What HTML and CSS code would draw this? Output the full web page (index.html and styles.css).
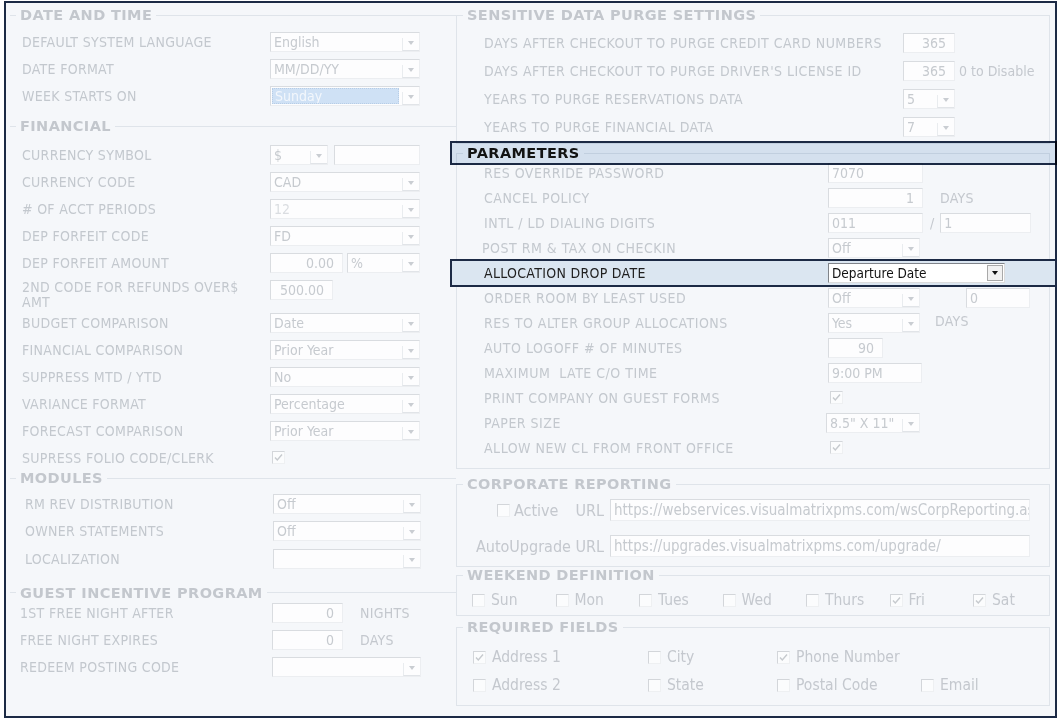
FILE: index.html
```html
<!DOCTYPE html>
<html lang="en">
<head>
    <meta charset="UTF-8">
    <link rel="stylesheet" href="styles.css">
    <title>Property Settings</title>
</head>
<body>
<div class="frame">

    <div class="col col-left">

        <fieldset class="grp left g-date">
            <legend>DATE AND TIME</legend>
            <div class="row"><span class="lbl">DEFAULT SYSTEM LANGUAGE</span><div class="sel w150"><span class="val">English</span><i class="arr"></i></div></div>
            <div class="row"><span class="lbl">DATE FORMAT</span><div class="sel w150"><span class="val">MM/DD/YY</span><i class="arr"></i></div></div>
            <div class="row"><span class="lbl">WEEK STARTS ON</span><div class="sel w150"><span class="val picked">Sunday</span><i class="arr"></i></div></div>
        </fieldset>

        <fieldset class="grp left g-fin">
            <legend>FINANCIAL</legend>
            <div class="row"><span class="lbl">CURRENCY SYMBOL</span><div class="sel w58"><span class="val">$</span><i class="arr"></i></div><div class="inp w86 ml6"></div></div>
            <div class="row"><span class="lbl">CURRENCY CODE</span><div class="sel w150"><span class="val">CAD</span><i class="arr"></i></div></div>
            <div class="row"><span class="lbl"># OF ACCT PERIODS</span><div class="sel w150 off"><span class="val">12</span><i class="arr"></i></div></div>
            <div class="row"><span class="lbl">DEP FORFEIT CODE</span><div class="sel w150"><span class="val">FD</span><i class="arr"></i></div></div>
            <div class="row"><span class="lbl">DEP FORFEIT AMOUNT</span><div class="inp w73 num">0.00</div><div class="sel w73 ml4"><span class="val">%</span><i class="arr"></i></div></div>
            <div class="row tall"><span class="lbl wrap">2ND CODE FOR REFUNDS OVER$ AMT</span><div class="inp w63 num">500.00</div></div>
            <div class="row"><span class="lbl">BUDGET COMPARISON</span><div class="sel w150"><span class="val">Date</span><i class="arr"></i></div></div>
            <div class="row"><span class="lbl">FINANCIAL COMPARISON</span><div class="sel w150"><span class="val">Prior Year</span><i class="arr"></i></div></div>
            <div class="row"><span class="lbl">SUPPRESS MTD / YTD</span><div class="sel w150"><span class="val">No</span><i class="arr"></i></div></div>
            <div class="row"><span class="lbl">VARIANCE FORMAT</span><div class="sel w150"><span class="val">Percentage</span><i class="arr"></i></div></div>
            <div class="row"><span class="lbl">FORECAST COMPARISON</span><div class="sel w150"><span class="val">Prior Year</span><i class="arr"></i></div></div>
            <div class="row"><span class="lbl">SUPRESS FOLIO CODE/CLERK</span><span class="cb ml2"><svg viewBox="0 0 9 9"><path d="M1 4.5l2.3 2.5L8 1.5" fill="none" stroke="#c6cace" stroke-width="1.4"/></svg></span></div>
        </fieldset>

        <fieldset class="grp left g-mod">
            <legend>MODULES</legend>
            <div class="row"><span class="lbl">RM REV DISTRIBUTION</span><div class="sel w148"><span class="val">Off</span><i class="arr"></i></div></div>
            <div class="row"><span class="lbl">OWNER STATEMENTS</span><div class="sel w148"><span class="val">Off</span><i class="arr"></i></div></div>
            <div class="row"><span class="lbl">LOCALIZATION</span><div class="sel w148"><span class="val"></span><i class="arr"></i></div></div>
        </fieldset>

        <fieldset class="grp left g-guest">
            <legend>GUEST INCENTIVE PROGRAM</legend>
            <div class="row"><span class="lbl">1ST FREE NIGHT AFTER</span><div class="inp w71 num">0</div><span class="unit">NIGHTS</span></div>
            <div class="row"><span class="lbl">FREE NIGHT EXPIRES</span><div class="inp w71 num">0</div><span class="unit">DAYS</span></div>
            <div class="row"><span class="lbl">REDEEM POSTING CODE</span><div class="sel w149"><span class="val"></span><i class="arr"></i></div></div>
        </fieldset>

    </div>

    <div class="col col-right">

        <fieldset class="grp right g-purge">
            <legend>SENSITIVE DATA PURGE SETTINGS</legend>
            <div class="row"><span class="lbl">DAYS AFTER CHECKOUT TO PURGE CREDIT CARD NUMBERS</span><div class="inp w52 num">365</div></div>
            <div class="row"><span class="lbl">DAYS AFTER CHECKOUT TO PURGE DRIVER'S LICENSE ID</span><div class="inp w52 num">365</div><span class="note">0 to Disable</span></div>
            <div class="row"><span class="lbl">YEARS TO PURGE RESERVATIONS DATA</span><div class="sel w52"><span class="val">5</span><i class="arr"></i></div></div>
            <div class="row"><span class="lbl">YEARS TO PURGE FINANCIAL DATA</span><div class="sel w52"><span class="val">7</span><i class="arr"></i></div></div>
        </fieldset>

        <fieldset class="grp right g-params">
            <legend class="hl-legend">PARAMETERS<span class="mark"></span></legend>
            <div class="row"><span class="lbl">RES OVERRIDE PASSWORD</span><div class="inp w95">7070</div></div>
            <div class="row"><span class="lbl">CANCEL POLICY</span><div class="inp w95 num">1</div><span class="unit">DAYS</span></div>
            <div class="row"><span class="lbl">INTL / LD DIALING DIGITS</span><div class="inp w95">011</div><span class="slash">/</span><div class="inp w91">1</div></div>
            <div class="row"><span class="lbl nudge">POST RM &amp; TAX ON CHECKIN</span><div class="sel w92"><span class="val">Off</span><i class="arr"></i></div></div>
            <div class="row hl"><span class="lbl">ALLOCATION DROP DATE</span><div class="sel live w177"><span class="val">Departure Date</span><i class="arr"></i></div></div>
            <div class="row"><span class="lbl">ORDER ROOM BY LEAST USED</span><div class="sel w92"><span class="val">Off</span><i class="arr"></i></div><div class="inp w64 ml46">0</div></div>
            <div class="row"><span class="lbl">RES TO ALTER GROUP ALLOCATIONS</span><div class="sel w92"><span class="val">Yes</span><i class="arr"></i></div><span class="unit up">DAYS</span></div>
            <div class="row"><span class="lbl">AUTO LOGOFF # OF MINUTES</span><div class="inp w55 num">90</div></div>
            <div class="row"><span class="lbl">MAXIMUM&nbsp; LATE C/O TIME</span><div class="inp w94">9:00 PM</div></div>
            <div class="row"><span class="lbl">PRINT COMPANY ON GUEST FORMS</span><span class="cb ml2"><svg viewBox="0 0 9 9"><path d="M1 4.5l2.3 2.5L8 1.5" fill="none" stroke="#c6cace" stroke-width="1.4"/></svg></span></div>
            <div class="row"><span class="lbl">PAPER SIZE</span><div class="sel w94 mlm2"><span class="val">8.5" X 11"</span><i class="arr"></i></div></div>
            <div class="row"><span class="lbl">ALLOW NEW CL FROM FRONT OFFICE</span><span class="cb ml2"><svg viewBox="0 0 9 9"><path d="M1 4.5l2.3 2.5L8 1.5" fill="none" stroke="#c6cace" stroke-width="1.4"/></svg></span></div>
        </fieldset>

        <fieldset class="grp right g-corp">
            <legend>CORPORATE REPORTING</legend>
            <div class="corp-row">
                <div class="corp-lbl"><span class="cb"></span><span class="txt ml4">Active</span><span class="txt ml17">URL</span></div>
                <div class="inp url">https://webservices.visualmatrixpms.com/wsCorpReporting.asmx</div>
            </div>
            <div class="corp-row">
                <div class="corp-lbl"><span class="txt">AutoUpgrade URL</span></div>
                <div class="inp url">https://upgrades.visualmatrixpms.com/upgrade/</div>
            </div>
        </fieldset>

        <fieldset class="grp right g-week">
            <legend>WEEKEND DEFINITION</legend>
            <div class="days">
                <label class="chk"><span class="cb"></span>Sun</label>
                <label class="chk"><span class="cb"></span>Mon</label>
                <label class="chk"><span class="cb"></span>Tues</label>
                <label class="chk"><span class="cb"></span>Wed</label>
                <label class="chk"><span class="cb"></span>Thurs</label>
                <label class="chk"><span class="cb"><svg viewBox="0 0 9 9"><path d="M1 4.5l2.3 2.5L8 1.5" fill="none" stroke="#c6cace" stroke-width="1.4"/></svg></span>Fri</label>
                <label class="chk"><span class="cb"><svg viewBox="0 0 9 9"><path d="M1 4.5l2.3 2.5L8 1.5" fill="none" stroke="#c6cace" stroke-width="1.4"/></svg></span>Sat</label>
            </div>
        </fieldset>

        <fieldset class="grp right g-req">
            <legend>REQUIRED FIELDS</legend>
            <div class="req">
                <label class="chk"><span class="cb"><svg viewBox="0 0 9 9"><path d="M1 4.5l2.3 2.5L8 1.5" fill="none" stroke="#c6cace" stroke-width="1.4"/></svg></span>Address 1</label>
                <label class="chk"><span class="cb"></span>City</label>
                <label class="chk"><span class="cb"><svg viewBox="0 0 9 9"><path d="M1 4.5l2.3 2.5L8 1.5" fill="none" stroke="#c6cace" stroke-width="1.4"/></svg></span>Phone Number</label>
                <span></span>
                <label class="chk"><span class="cb"></span>Address 2</label>
                <label class="chk"><span class="cb"></span>State</label>
                <label class="chk"><span class="cb"></span>Postal Code</label>
                <label class="chk"><span class="cb"></span>Email</label>
            </div>
        </fieldset>

    </div>
</div>
</body>
</html>
```

FILE: styles.css
```css
* {
    box-sizing: border-box;
}

body {
    margin: 0;
    background-color: #ffffff;
    font-family: "DejaVu Sans Condensed", "DejaVu Sans", Verdana, sans-serif;
    font-stretch: condensed;
    color: #c4c8ce;
}

.frame {
    margin: 1px 0 0 4px;
    width: 1053px;
    height: 717px;
    border: 2px solid #1c2a45;
    background-color: #f5f7fa;
    display: flex;
    padding: 5px 0 0 4px;
}

.col-left {
    width: 446px;
}

.col-right {
    width: 594px;
}

/* section boxes */
.grp {
    margin: 0;
    min-width: 0;
    border: 1px solid #dfe4ea;
    padding: 0 0 0 6px;
}

.grp.left {
    border-width: 1px 0 0 0;
}

.grp legend {
    padding: 0 4px;
    font-family: "DejaVu Sans", Verdana, sans-serif;
    font-stretch: normal;
    font-weight: bold;
    font-size: 14.5px;
    line-height: 14px;
    letter-spacing: 0.4px;
    color: #c3c7cd;
}

.g-date { padding-top: 6px; padding-bottom: 10px; }
.g-fin { padding-top: 8px; }
.g-mod { padding-top: 5px; padding-bottom: 13px; }
.g-guest { padding-top: 0; padding-bottom: 26px; border-bottom-width: 1px; }

.g-purge { padding-top: 7px; padding-bottom: 2px; }
.g-params { margin-top: 2px; padding-bottom: 8px; }
.g-corp { margin-top: 8px; padding-top: 1px; padding-bottom: 2px; }
.g-week { margin-top: 1px; padding-top: 5px; padding-bottom: 2px; }
.g-req { margin-top: 4px; padding-top: 9px; padding-bottom: 6px; }

/* rows */
.row {
    display: flex;
    align-items: center;
    height: 27px;
    padding-left: 6px;
}

.row.tall {
    height: 33px;
    align-items: flex-start;
    padding-top: 4px;
}

.g-mod .row { padding-left: 9px; height: 27.5px; }
.g-guest .row { padding-left: 4px; }
.g-guest .lbl { width: 252px; }
.g-purge .row { height: 28px; padding-left: 21px; }
.g-params .row { height: 25px; padding-left: 21px; }

.lbl {
    width: 248px;
    flex: none;
    font-size: 14px;
    letter-spacing: 0.3px;
    white-space: nowrap;
    color: #c3c8ce;
}

.lbl.wrap {
    white-space: normal;
    line-height: 15px;
    padding-right: 30px;
}

.g-purge .lbl { width: 419px; letter-spacing: 0.45px; }
.g-params .lbl { width: 344px; letter-spacing: 0.5px; }
.g-params .lbl.nudge { margin-left: -2px; width: 346px; }

/* controls */
.inp, .sel {
    height: 20px;
    flex: none;
    border: 1px solid;
    border-color: #d9dce0 #eceef1 #eceef1 #d9dce0;
    background-color: #fdfdfe;
    font-size: 14px;
    line-height: 18px;
    color: #c6cacf;
    white-space: nowrap;
    overflow: hidden;
}

.inp {
    padding: 0 3px;
}

.inp.num {
    text-align: right;
    padding-right: 8px;
}

.sel {
    display: flex;
    align-items: stretch;
}

.sel .val {
    flex: 1;
    padding-left: 3px;
    overflow: hidden;
}

.sel .val.picked {
    margin: 1px 3px 1px 1px;
    padding-left: 2px;
    background-color: #cfe1f5;
    border: 1px dotted #b7cde6;
    color: #f3f7fc;
    line-height: 14px;
}

.sel.off .val {
    color: #dadde1;
}

.arr {
    width: 17px;
    flex: none;
    position: relative;
    border-left: 1px solid #e9ecef;
    border-bottom: 1px solid #e1e4e8;
    margin-top: 5px;
}

.arr::after {
    content: "";
    position: absolute;
    left: 5px;
    top: 3px;
    border-left: 3.5px solid transparent;
    border-right: 3.5px solid transparent;
    border-top: 4px solid #c9cdd2;
}

.w52 { width: 52px; }
.w55 { width: 55px; }
.w58 { width: 58px; }
.w63 { width: 63px; }
.w64 { width: 64px; }
.w71 { width: 71px; }
.w73 { width: 73px; }
.w86 { width: 86px; }
.w91 { width: 91px; }
.w92 { width: 92px; }
.w94 { width: 94px; }
.w95 { width: 95px; }
.w148 { width: 148px; }
.w149 { width: 149px; }
.w150 { width: 150px; }
.w177 { width: 177px; }

.ml2 { margin-left: 2px; }
.ml4 { margin-left: 4px; }
.ml6 { margin-left: 6px; }
.ml17 { margin-left: 17px; }
.ml46 { margin-left: 46px; }
.mlm2 { margin-left: -2px; }

.unit {
    margin-left: 17px;
    font-size: 14px;
    letter-spacing: 0.3px;
}

.unit.up {
    margin-left: 15px;
    margin-top: -4px;
}

.slash {
    margin: 0 6px 0 7px;
    font-size: 14px;
}

.note {
    margin-left: 4px;
    font-size: 14px;
    white-space: nowrap;
}

/* highlighted items */
.hl-legend {
    position: relative;
    color: #141414 !important;
}

.mark {
    position: absolute;
    left: -13px;
    top: -5px;
    width: 607px;
    height: 24px;
    border: 2px solid #1c2a45;
    background-color: #dde8f3;
    mix-blend-mode: multiply;
}

.g-params .row.hl {
    height: 28px;
    margin: -1px -8px -2px -13px;
    padding-left: 32px;
    border: 2px solid #1c2a45;
    background-color: #dbe6f1;
}

.row.hl .lbl {
    color: #1f1f1f;
    letter-spacing: 0.3px;
}

.sel.live {
    background-color: #ffffff;
    border-color: #80848a #dcdcdc #dcdcdc #80848a;
    color: #111111;
    font-size: 13.5px;
}

.sel.live .arr {
    width: 16px;
    margin: 1px;
    background-color: #f1f1f1;
    border: 1px solid #a9a9a9;
}

.sel.live .arr::after {
    left: 3.5px;
    top: 5px;
    border-top-color: #111111;
}

/* checkboxes */
.cb {
    width: 13px;
    height: 13px;
    flex: none;
    display: inline-flex;
    align-items: center;
    justify-content: center;
    border: 1px solid;
    border-color: #d3d6da #eef0f2 #eef0f2 #d3d6da;
    background-color: #fbfcfd;
}

.cb svg {
    width: 9px;
    height: 9px;
}

.chk {
    display: flex;
    align-items: center;
    gap: 6px;
    font-size: 15.5px;
    white-space: nowrap;
}

.txt {
    font-size: 16px;
}

.corp-row {
    display: flex;
    align-items: center;
    height: 36px;
}

.corp-lbl {
    width: 147px;
    display: flex;
    align-items: center;
    justify-content: flex-end;
    padding-right: 6px;
}

.inp.url {
    width: 420px;
    height: 22px;
    line-height: 20px;
    font-size: 15px;
}

.days {
    display: grid;
    grid-template-columns: repeat(6, 83.5px) auto;
    align-items: center;
    height: 26px;
    padding-left: 9px;
}

.req {
    display: grid;
    grid-template-columns: 175px 129px 144px auto;
    grid-auto-rows: 28px;
    align-items: center;
    padding-left: 10px;
}
```
